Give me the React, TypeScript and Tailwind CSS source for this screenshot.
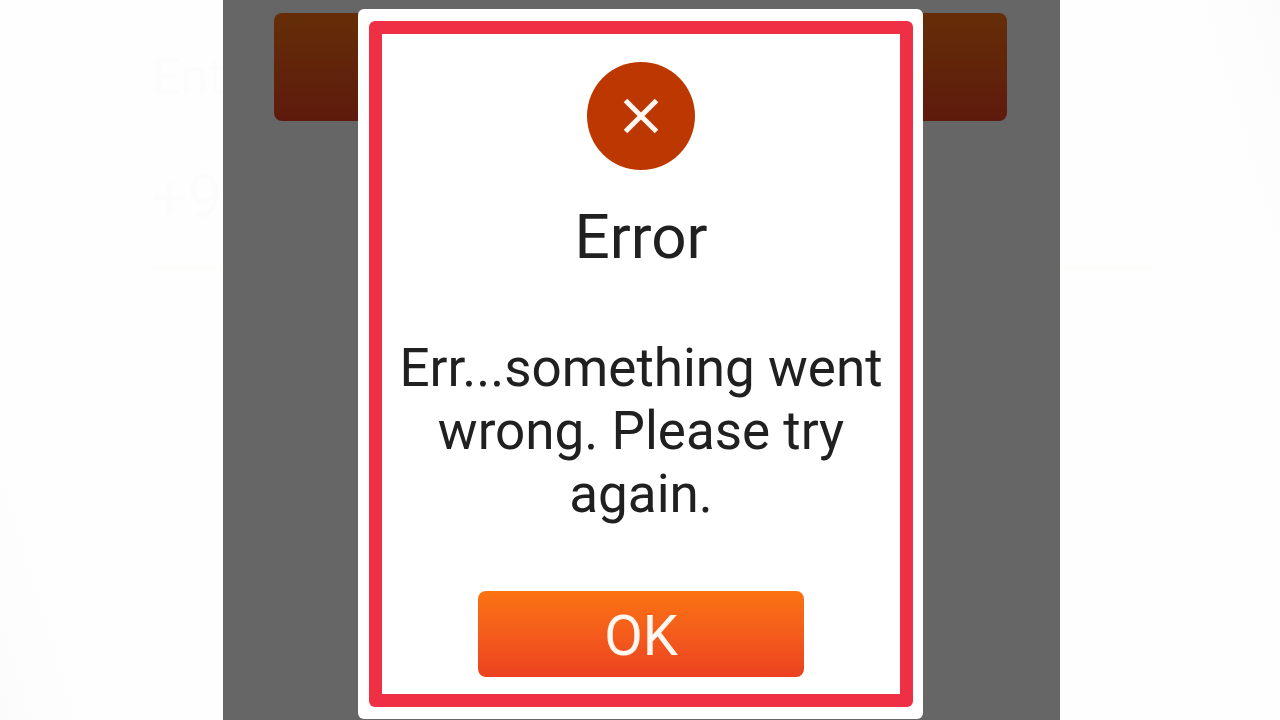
import { useEffect, useRef } from "react";

function ErrorDialog() {
  const okRef = useRef<HTMLButtonElement>(null);

  useEffect(() => {
    okRef.current?.focus({ preventScroll: true });
  }, []);

  return (
    <div
      role="alertdialog"
      aria-modal="true"
      aria-labelledby="error-title"
      aria-describedby="error-message"
      className="w-[565px] rounded-md bg-white pt-3 pr-[10px] pb-3 pl-[11px]"
    >
      <div className="rounded-md bg-[#ef2f43] p-[13px]">
        <div className="flex flex-col items-center bg-white pt-7 pb-[17px] text-[#202020]">
          <div className="flex h-27 w-27 items-center justify-center rounded-full bg-[#bd3800]">
            <svg className="h-9 w-9" viewBox="0 0 36 36" fill="none" stroke="#fff7f0" strokeWidth={5} aria-hidden="true">
              <path d="M2.5 2.5L33.5 33.5M33.5 2.5L2.5 33.5" />
            </svg>
          </div>
          <h1 id="error-title" className="mt-[31px] text-[62px] leading-[72px]">
            Error
          </h1>
          <p id="error-message" className="mt-16 px-3 text-center text-[53px] leading-[63px]">
            Err...something went wrong. Please try again.
          </p>
          <button
            ref={okRef}
            type="button"
            className="mt-[65px] h-[86px] w-[326px] rounded-lg bg-linear-to-b from-[#fb7312] to-[#ec4120] pt-1 text-[56px] leading-[63px] text-[#fff7f0] outline-none"
          >
            OK
          </button>
        </div>
      </div>
    </div>
  );
}

export default function App() {
  return (
    <main className="grid min-h-screen grid-cols-[223fr_837fr_220fr] overflow-hidden bg-[#fefefe] font-['Roboto',sans-serif]">
      {/* washed out copy of the form on both sides of the screen */}
      <div className="overflow-hidden bg-linear-to-tr from-[#fbfbfb] to-[#fefefe] to-20% pt-[46px] pl-[152px] whitespace-nowrap text-[#fcfcfc]">
        <p className="text-[50px] leading-[63px]">Ent</p>
        <p className="mt-14 border-b-4 border-[#fdfdfc] pb-9 text-[62px] leading-16">+9</p>
      </div>

      <section className="relative bg-white">
        <div className="pt-[13px] pr-[53px] pl-[51px]">
          <button
            type="button"
            tabIndex={-1}
            aria-label="Continue"
            className="block h-27 w-full rounded-lg bg-linear-to-b from-[#fb7312] to-[#ec4120]"
          />
        </div>
        <div className="absolute inset-0 flex items-start justify-center bg-black/60 pt-[9px] pr-[2px]">
          <ErrorDialog />
        </div>
      </section>

      <div className="bg-linear-to-bl from-[#fbfbfb] to-[#fefefe] to-20% pt-[267px] pr-32">
        <hr className="border-t-4 border-[#fdfdfc]" />
      </div>
    </main>
  );
}
